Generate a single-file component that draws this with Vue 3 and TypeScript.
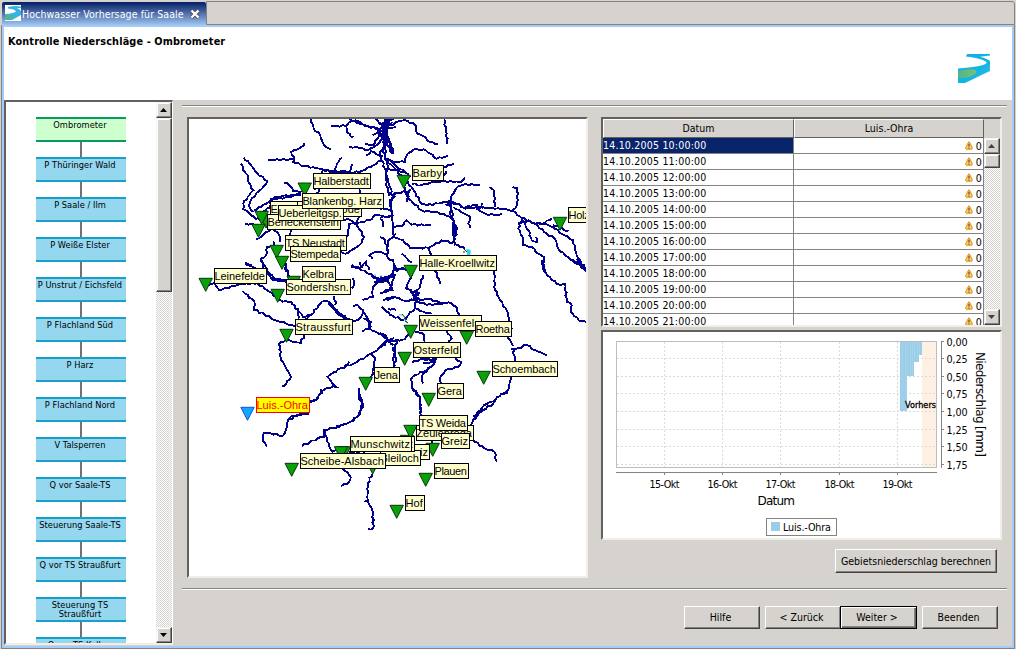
<script setup lang="ts">
interface Station { x: number; y: number; selected?: boolean }
interface Label { text: string; x: number; y: number; w: number; selected?: boolean }
interface Sheet { x: number; y: number; lines: string[] }

const steps: string[] = [
  'Ombrometer', 'P Thüringer Wald', 'P Saale / Ilm', 'P Weiße Elster', 'P Unstrut / Eichsfeld',
  'P Flachland Süd', 'P Harz', 'P Flachland Nord', 'V Talsperren', 'Q vor Saale-TS',
  'Steuerung Saale-TS', 'Q vor TS Straußfurt', 'Steuerung TS Straußfurt', 'Q vor TS Kelbra',
]
const hours: number[] = Array.from({ length: 12 }, (_, i) => i + 10)

// River courses, digitised per map sheet in thirds of a pixel
const sheets: Sheet[] = [
  { x: 186, y: 112, lines: [
    '375,20 383,50 403,70 410,92 420,105 435,112', '435,42 478,42 490,30 510,25 540,40 570,48 600,50 630,45',
    '480,40 483,62 502,76', '490,20 520,35 545,42 580,54 600,60', '580,52 575,80 560,100 538,95',
    '490,105 520,108 545,115 570,100 590,80 600,70', '600,20 590,50 600,80 590,110 580,130 555,118 540,130',
    '612,20 598,60 612,90 622,120', '590,60 605,100 618,125', '570,20 590,45 620,30', '575,55 590,75 580,95', '560,70 580,60 600,95',
    '247,144 325,142 322,150 355,162 400,170 440,178 480,182 520,180 555,165 585,145 590,130',
    '325,142 316,120 335,112 355,98 355,92', '173,137 190,155 215,185 243,207 240,218 215,240 195,265 190,285 203,300',
    '165,155 172,175 185,190 187,210 202,235 185,255 172,275 172,292 190,305 208,320',
    '203,295 225,285 248,270 262,258 300,250 345,248', '295,212 310,220 322,238 340,240 355,232', '345,240 315,255 255,262 250,285',
    '445,178 452,155 468,138', '485,182 495,170 500,155', '412,170 405,200 400,235 390,245', '410,172 440,182 480,176',
    '178,335 215,338', '210,380 225,375 240,360 262,350 280,370 282,390', '262,388 265,400 243,405 240,430 225,440 232,465 240,480',
    '178,455 200,465 210,480', '590,110 605,160 600,200 605,240 628,255', '628,240 612,280 620,310 600,315 570,308 550,325 510,335 490,335 485,370 478,385',
    '510,335 535,375 520,400 500,412 480,425 465,420', '630,365 605,390 605,425 570,420 550,430 560,440',
    '495,465 520,470 540,450 550,475', '520,230 528,250', '520,310 510,335', '465,320 495,325 515,335', '315,355 308,375', '298,450 300,480', '385,235 440,185 500,182', '230,300 260,280 300,270', '208,320 240,325',
  ] },
  { x: 380, y: 112, lines: [
    '0,50 30,40 55,28 75,25 105,38 112,65 130,72 150,90 175,97', '193,20 197,55 203,97', '15,20 20,60 10,90 18,120 15,140 35,148 75,150 80,130 100,113 130,112 150,125 170,140 203,132',
    '0,60 20,80 30,95 40,125', '25,20 10,50 25,80 15,110', '35,148 50,165 75,180 90,195', '5,35 40,20', '0,30 20,52', '0,130 15,170 25,210 35,240 25,250',
    '15,140 45,170 75,205 95,225 125,275 140,280 200,270 212,275', '15,170 50,175 80,185', '190,165 222,155', '190,190 200,178', '95,215 125,220 150,212 195,208 245,210 255,198',
    '75,205 75,240 85,260 125,295 190,305 215,320 225,345 222,390 235,400 255,412', '90,230 80,270', '212,275 215,250 232,225 250,218 300,218',
    '212,275 212,310 232,350 220,390', '207,265 217,300 220,335 218,360 226,400', '212,270 240,278 255,290 290,285 345,290 375,290 400,298 425,318 465,335 495,335 520,345 545,365 580,385 590,430 615,470',
    '255,288 280,278 310,290', '290,275 290,290', '308,272 305,287', '330,225 342,235 345,285', '398,225 412,228 412,270 405,290 395,300', '290,290 315,305 345,310 365,305', '220,285 270,315 265,335 270,348', '212,265 200,278 235,275 245,288',
    '465,335 500,365 525,380 535,410 555,430 580,445 615,460', '465,335 495,332 515,318', '520,340 545,348 565,358', '425,318 415,350 428,375 428,400 455,405 475,425 492,435 490,455 495,480', '425,320 445,355 455,385 470,390 468,375', '415,335 445,325 455,335',
    '590,440 618,475', '40,345 65,342 80,325 95,338 152,340', '90,235 45,245 30,265 35,300 38,345 42,375 70,385 90,408 145,408 185,385 220,393', '145,408 155,430', '0,290 35,292', '0,318 30,310', '0,320 10,330 8,345', '0,375 15,385 20,410 25,440 40,445 50,480', '65,425 95,452', '45,472 75,470',
  ] },
  { x: 186, y: 260, lines: [
    '178,8 210,25 240,35 260,60 300,65', '228,0 245,35 270,58 300,60', '60,75 85,70 100,90 165,72 215,70 250,95 290,125 315,125 335,150 340,175',
    '170,93 205,125 205,150 235,162 265,180 300,190 330,200', '410,122 375,165 350,185', '410,122 430,125 445,145 480,178', '425,130 460,160 490,178', '428,125 450,158 480,178', '335,145 350,170 375,165',
    '445,108 448,135', '500,55 505,75 498,85', '295,10 300,25 310,50', '355,225 345,248 318,245 300,238 278,252 285,275 283,290 300,325 315,350 295,378 287,380',
    '555,280 575,270 600,245 625,235', '555,280 540,290 500,312 465,325 435,342 425,350 440,372 450,380 420,385 405,395 390,420 370,425', '490,305 475,322', '405,395 405,388',
    '310,478 335,465 370,460', '555,280 568,295 562,325 555,360', '520,385 522,410 530,430 518,465 500,480', '497,15 520,25 550,42 580,58 610,50 630,45', '520,5 525,25', '550,40 575,62 600,58', '565,65 605,65', '570,52 595,68', '575,62 560,85 560,110 530,120', '605,60 620,90 590,98', '630,20 615,45 600,60',
    '500,140 515,135 530,150 528,165 515,180 500,182 490,178', '530,155 545,175 555,200 530,215', '530,175 555,185 550,205 570,215 590,225 605,245', '605,145 630,150', '590,120 625,115', '620,260 630,295 620,330',
  ] },
  { x: 380, y: 260, lines: [
    '0,60 40,45 42,20 60,28 90,28', '0,98 28,90 40,60 40,42', '0,50 15,60 38,52', '95,45 80,80 105,105 105,145 130,155 155,162', '75,85 95,95 120,100', '90,95 115,115 100,110', '105,90 110,130', '95,105 118,105', '110,100 120,75 130,45', '165,32 182,72',
    '15,118 40,110 75,122 105,120 145,118 185,128 215,130 232,145 235,170', '115,125 140,135 190,130', '5,140 30,165 70,180 85,165 105,145', '343,30 345,90 360,120 385,160 388,185 395,205 385,235 400,258', '400,270 440,255 465,270 485,278 500,285', '392,267 405,267 400,275 405,290 408,305',
    '392,350 388,375 380,395 350,412 340,430 310,450 285,472', '370,400 385,398', '280,465 290,478', '487,0 490,30 515,60 540,75 555,72 560,125 575,135 572,155 595,180 618,186', '570,0 600,15 618,35', '580,0 610,18 618,30',
    '0,220 15,225 25,245 75,238 90,215', '0,258 15,255 20,240', '20,240 40,255', '50,240 45,265 40,300 45,320', '100,212 130,222 135,245', '200,212 215,235 205,245', '95,308 120,298 165,300 160,315 130,335 105,345 93,358 95,380 120,410 122,470', '130,298 170,298', '130,310 165,306', '160,315 130,340 125,355 130,370', '225,295 243,305 235,320 195,332 180,355 185,380',
  ] },
  { x: 236, y: 390, lines: [
    '260,0 245,25 220,38', '210,70 165,80 155,95 150,120 140,138 105,130 83,130 80,145 92,170', '530,0 550,20 555,75', '370,0 368,20 380,45 370,75 345,95 310,110 265,120 265,140 245,145 220,158 198,168', '265,120 280,170 290,185 300,180', '300,108 330,102',
    '318,235 340,255 343,270 335,282 315,288', '410,250 395,280 395,330 410,365 412,415 397,418', '780,28 745,45 720,75 705,105 710,150 745,175 775,185 782,215', '710,80 725,78', '588,150 588,170', '370,180 370,195', '382,180 382,195', '340,185 365,185', '385,335 395,330',
  ] },
]

/** Subdivides a course and offsets the inner vertices a little so that it meanders. */
function meander(line: string): string {
  const p = line.split(' ').map((s) => s.split(',').map(Number))
  let out = `${p[0][0]},${p[0][1]}`
  for (let i = 1; i < p.length; i++) {
    const [ax, ay] = p[i - 1]
    const [bx, by] = p[i]
    const len = Math.hypot(bx - ax, by - ay)
    const n = Math.max(1, Math.round(len / 9))
    for (let k = 1; k < n; k++) {
      const t = k / n
      const off = Math.sin(ax * 1.7 + ay * 2.3 + k * 2.6) * 2.4
      out += ` ${(ax + (bx - ax) * t - ((by - ay) / len) * off).toFixed(1)},${(ay + (by - ay) * t + ((bx - ax) / len) * off).toFixed(1)}`
    }
    out += ` ${bx},${by}`
  }
  return out
}

const stations: Station[] = [
  { x: 304.7, y: 183 }, { x: 403.7, y: 175.3 }, { x: 560, y: 217.3 }, { x: 266, y: 215 }, { x: 261.7, y: 211.3 },
  { x: 258.5, y: 224.3 }, { x: 276.7, y: 245.3 }, { x: 282, y: 256.3 }, { x: 205.7, y: 278.3 }, { x: 293.7, y: 276.3 },
  { x: 277.7, y: 289.3 }, { x: 286.5, y: 329.3 }, { x: 365.7, y: 377.3 }, { x: 410.7, y: 265.3 }, { x: 410.7, y: 325.3 },
  { x: 466.7, y: 331.3 }, { x: 404.7, y: 352.3 }, { x: 483.7, y: 371.3 }, { x: 428.7, y: 393.3 }, { x: 407, y: 435.3 },
  { x: 410.5, y: 425.3 }, { x: 432.7, y: 443.3 }, { x: 344, y: 446.7 }, { x: 341, y: 446.7 }, { x: 372.7, y: 461 },
  { x: 425.7, y: 473.3 }, { x: 396.7, y: 505.3 }, { x: 291.7, y: 463.3 }, { x: 247.5, y: 407.3, selected: true },
]
const labels: Label[] = [
  { text: 'Halberstadt', x: 313, y: 173, w: 58 }, { text: 'Elbingerode', x: 270, y: 201, w: 60 }, { text: 'Wernigerode', x: 297, y: 201, w: 65 },
  { text: 'Beneckenstein', x: 267, y: 214, w: 74 }, { text: 'Ueberleitgsp.', x: 278, y: 205, w: 66 }, { text: 'Blankenbg. Harz', x: 302, y: 193, w: 82 },
  { text: 'TS Neustadt', x: 285, y: 235, w: 62 }, { text: 'Stempeda', x: 290, y: 246, w: 51 }, { text: 'Leinefelde', x: 214, y: 268, w: 53 },
  { text: 'Sondershsn.', x: 286, y: 279, w: 65 }, { text: 'Kelbra', x: 302, y: 266, w: 34 }, { text: 'Straussfurt', x: 295, y: 319, w: 58 },
  { text: 'Jena', x: 374, y: 367, w: 26 }, { text: 'Barby', x: 412, y: 165, w: 32 }, { text: 'Holzdorf', x: 568, y: 207, w: 42 },
  { text: 'Halle-Kroellwitz', x: 419, y: 255, w: 78 }, { text: 'Weissenfels', x: 419, y: 315, w: 63 }, { text: 'Roetha', x: 475, y: 321, w: 37 },
  { text: 'Osterfeld', x: 413, y: 342, w: 48 }, { text: 'Schoembach', x: 492, y: 361, w: 66 }, { text: 'Gera', x: 437, y: 383, w: 27 },
  { text: 'Zeulenroda', x: 416, y: 425, w: 58 }, { text: 'TS Weida', x: 419, y: 415, w: 49 }, { text: 'Greiz', x: 441, y: 433, w: 29 },
  { text: 'Schleiz', x: 392, y: 444, w: 38 }, { text: 'Bleiloch', x: 380, y: 450, w: 41 }, { text: 'Munschwitz', x: 353, y: 436, w: 62 },
  { text: 'Munschwitz', x: 350, y: 436, w: 62 }, { text: 'Scheibe-Alsbach', x: 300, y: 453, w: 86 }, { text: 'Plauen', x: 434, y: 463, w: 35 },
  { text: 'Hof', x: 405, y: 495, w: 20 }, { text: 'Luis.-Ohra', x: 256, y: 397, w: 54, selected: true },
]

const xTicks = [
  { x: 664.5, text: '15-Okt' }, { x: 722.5, text: '16-Okt' }, { x: 780.5, text: '17-Okt' }, { x: 839.5, text: '18-Okt' }, { x: 897.5, text: '19-Okt' },
]
const yTicks = [
  { y: 341.5, text: '0,00' }, { y: 358.5, text: '0,25' }, { y: 376.5, text: '0,50' }, { y: 393.5, text: '0,75' },
  { y: 411.5, text: '1,00' }, { y: 429.5, text: '1,25' }, { y: 446.5, text: '1,50' }, { y: 464.5, text: '1,75' },
]
const barLines = [902, 905, 907, 910, 912, 914, 917, 919]
</script>

<template>
  <div class="window">
    <div class="tabs">
      <div class="tab">
        <svg class="tab-icon" width="16" height="16" viewBox="0 0 16 16">
          <rect width="16" height="16" fill="#fff" />
          <path d="M3 2Q9 .5 16 1.5V3H12Q16 5 16 6.5V10L7 15H0V9Q8 8.5 11 6.5Q10 4 3 3.5Z" fill="#38b4e0" />
          <ellipse cx="4" cy="12" rx="4.5" ry="2.2" fill="#55b48c" />
        </svg>
        <span class="tab-title">Hochwasser Vorhersage für Saale</span>
        <svg class="tab-close" width="10" height="10" viewBox="0 0 10 10">
          <path d="M1.5 1.5L8.5 8.5M8.5 1.5L1.5 8.5" stroke="#505060" stroke-width="4" />
          <path d="M1.5 1.5L8.5 8.5M8.5 1.5L1.5 8.5" stroke="#fff" stroke-width="2.4" />
        </svg>
      </div>
      <div class="tab-rest"></div>
    </div>
    <div class="body">
      <header class="head">
        <h1>Kontrolle Niederschläge - Ombrometer</h1>
        <svg class="logo" width="32" height="29" viewBox="0 0 32 29">
          <defs>
            <linearGradient id="water" x1="0" y1="0" x2="1" y2="1"><stop offset="0" stop-color="#12b0e8" /><stop offset=".6" stop-color="#10b4e6" /><stop offset="1" stop-color="#50b8e0" /></linearGradient>
            <linearGradient id="land" x1="0" x2="1"><stop offset="0" stop-color="#50b48c" /><stop offset="1" stop-color="#7cc070" /></linearGradient>
          </defs>
          <path d="M9 0H32V1.6L22 2.8Q30 5 32 7V17L7 29H0V14.5Q18 13 25 11Q31 9 27 7Q20 4 8 2.6Z" fill="url(#water)" />
          <path d="M0 17Q7 15 13 15.2Q20 15.5 18 19Q14 24 0 24.5Z" fill="url(#land)" />
        </svg>
      </header>
      <div class="content">
        <aside class="flow">
          <div class="flow-view">
            <div v-for="(s, i) in steps" :key="s" class="step" :class="{ active: i === 0 }"><span>{{ s }}</span></div>
          </div>
          <div class="scroll">
            <div class="sbtn"><svg width="8" height="4"><path d="M0 4L3.5 0L7 4Z" fill="#000" /></svg></div>
            <div class="thumb thumb-flow"></div>
            <div class="track"></div>
            <div class="sbtn"><svg width="8" height="4"><path d="M0 0L3.5 4L7 0Z" fill="#000" /></svg></div>
          </div>
        </aside>
        <main class="main">
          <div class="rule"></div>
          <div class="panels">
            <div class="frame map">
              <svg width="397" height="457" viewBox="189 119 397 457">
                <g v-for="sh in sheets" :key="`${sh.x}-${sh.y}`" :transform="`translate(${sh.x} ${sh.y}) scale(.33333)`" class="river">
                  <polyline v-for="l in sh.lines" :key="l" :points="meander(l)" />
                </g>
                <path d="M374 275h2M380 276h2M467 249.5l3 1v3.5l-2 1zM399 315h3M404 319l3 3" stroke="#20d8e8" fill="#20d8e8" stroke-width="1.2" />
                <path d="M463 248l4 4M463 252h2M402 314l5 6M405 321l3 2" stroke="#222" />
                <path v-for="(m, i) in stations" :key="i" :d="`M${m.x - 6.7} ${m.y}h13.4l-6.7 13z`" :fill="m.selected ? '#10a8ff' : '#0aa00a'" :stroke="m.selected ? '#1450e0' : '#063806'" />
                <g v-for="(l, i) in labels" :key="i">
                  <rect :x="l.x + 0.5" :y="l.y + 0.5" :width="l.w - 1" height="15" :fill="l.selected ? '#ff0' : '#ffffce'" :stroke="l.selected ? '#f00' : '#000'" />
                  <text class="lab" :x="l.x + 0.4" :y="l.y + 12" :textLength="l.w - 2.5" :fill="l.selected ? '#f00' : '#000'">{{ l.text }}</text>
                </g>
              </svg>
            </div>
            <div class="right">
              <div class="frame table">
                <div class="grid">
                  <div class="row hrow"><div class="th c1">Datum</div><div class="th c2">Luis.-Ohra</div></div>
                  <div v-for="(h, i) in hours" :key="h" class="row">
                    <div class="c1 td" :class="{ sel: i === 0 }">14.10.2005 {{ h }}:00:00</div>
                    <div class="c2 td val">
                      <svg width="8" height="9" viewBox="0 0 8 9"><path d="M4 .7L5.6 3L7.5 7.2L6.8 8.3H1.2L.5 7.2L2.4 3Z" fill="#fcc858" stroke="#d89830" /><path d="M4 2.8V5.6M4 6.4V7.5" stroke="#604010" stroke-width="1.1" /></svg>
                      <span>0</span>
                    </div>
                  </div>
                </div>
                <div class="scroll tscroll">
                  <div class="sbtn"><svg width="8" height="4"><path d="M0 4L3.5 0L7 4Z" fill="#424142" /></svg></div>
                  <div class="thumb thumb-table"></div>
                  <div class="track"></div>
                  <div class="sbtn"><svg width="8" height="4"><path d="M0 0L3.5 4L7 0Z" fill="#424142" /></svg></div>
                </div>
              </div>
              <div class="frame chart">
                <svg width="397" height="206" viewBox="603 332 397 206">
                  <rect x="922" y="342" width="15" height="125" fill="#fff0e4" />
                  <g stroke="#dadada" stroke-dasharray="2 2">
                    <path v-for="t in xTicks" :key="t.x" :d="`M${t.x} 342V467`" />
                    <path v-for="t in yTicks" :key="t.y" :d="`M617 ${t.y}H936`" />
                  </g>
                  <path d="M900 342H922V355H919V362H914V376H907V411H900Z" fill="#9acde8" />
                  <path v-for="b in barLines" :key="b" :d="`M${b + 0.5} 342V${b < 907 ? 411 : b < 914 ? 376 : b < 919 ? 362 : 355}`" stroke="#aad6ec" stroke-width=".7" />
                  <rect x="616.5" y="341.5" width="320" height="126" fill="none" stroke="#bdbdbd" />
                  <path d="M616 472.5H937M941.5 341V468" stroke="#848284" fill="none" />
                  <g stroke="#848284">
                    <path v-for="t in xTicks" :key="t.x" :d="`M${t.x} 473V475`" />
                    <path v-for="t in yTicks" :key="t.y" :d="`M942 ${t.y}H944`" />
                  </g>
                  <text v-for="t in xTicks" :key="t.text" class="ct" :x="t.x - 15" y="488" textLength="30">{{ t.text }}</text>
                  <text v-for="t in yTicks" :key="t.text" class="ct" x="946.5" :y="t.y + 4" textLength="21">{{ t.text }}</text>
                  <text class="ct bold" x="905" y="408" textLength="31">Vorhers</text>
                  <text class="cl" x="757.5" y="505" textLength="37.5">Datum</text>
                  <text class="cl" transform="translate(976 352) rotate(90)" textLength="105">Niederschlag [mm]</text>
                  <rect x="766.5" y="518.5" width="70" height="17" fill="#fff" stroke="#848284" />
                  <rect x="771" y="522" width="9" height="9" fill="#9acde8" />
                  <text class="ct" x="783" y="531" textLength="48">Luis.-Ohra</text>
                </svg>
              </div>
              <div class="calc"><button class="btn wide">Gebietsniederschlag berechnen</button></div>
            </div>
          </div>
          <div class="rule"></div>
          <footer class="foot">
            <button class="btn">Hilfe</button>
            <div class="pair"><button class="btn">&lt; Zurück</button><button class="btn default">Weiter &gt;</button></div>
            <button class="btn">Beenden</button>
          </footer>
        </main>
      </div>
    </div>
  </div>
</template>

<style>
body { margin: 0; background: #d6d3ce; overflow: hidden; }
</style>

<style scoped>
* { box-sizing: border-box; }
.window { width: 1016px; height: 649px; padding: 1px 1px 1px 2px; background: #d6d3ce; font: 10.5px/13px "DejaVu Sans Condensed", "DejaVu Sans", sans-serif; color: #000; display: flex; flex-direction: column; }
.tabs { display: flex; height: 24px; flex: none; }
.tab { width: 204px; height: 24px; margin-top: 1px; border-top: 1px solid #0a246a; border-radius: 2px 2px 0 0; background: linear-gradient(#0a246a, #a5cbf7); color: #fff; display: flex; align-items: center; padding-left: 3px; }
.tab-icon { flex: none; margin-bottom: 3px; }
.tab-title { width: 165px; margin-left: 1px; letter-spacing: 0.1px; white-space: nowrap; }
.tab-close { flex: none; margin-left: 3px; margin-bottom: 1px; }
.tab-rest { flex: 1; border: 1px solid #848284; border-radius: 0 3px 0 0; }
.body { flex: 1; border: 2px solid #a5cbf7; outline: 1px solid #848284; margin: 0 1px 0 0; display: flex; flex-direction: column; min-height: 0; clip-path: inset(0 -1px -1px -1px); }
.head { height: 73px; flex: none; background: #fff; display: flex; justify-content: space-between; padding: 8px 22px 0 4px; }
h1 { margin: 0; font-size: 10.8px; line-height: 13px; font-weight: 700; letter-spacing: 0.14px; }
.logo { margin-top: 19px; }
.content { flex: 1; display: flex; min-height: 0; }
.flow { width: 169px; height: 545px; flex: none; background: #fff; border: 1px solid; border-width: 2px 1px 2px 2px; border-color: #63615f #fff #f0eeeb #63615f; display: flex; overflow: hidden; }
.flow-view { flex: 1; height: 541px; overflow: hidden; padding: 15px 0 0 30px; }
.step { width: 90px; height: 25px; margin-bottom: 15px; border: solid #18a0cc; border-width: 2px 0; background: #94d7ef; position: relative; text-align: center; font-size: 9.2px; line-height: 9px; padding-top: 1px; }
.step::after { content: ""; position: absolute; left: 44px; top: 23px; width: 2px; height: 15px; background: #737173; }
.step.active { background: #ceffce; border-color: #089a63; }
.step span { display: block; margin: 0 -1px 0 -3px; letter-spacing: 0.04px; }
.scroll { width: 16px; flex: none; display: flex; flex-direction: column; }
.sbtn, .thumb { background: #d6d3ce; border: 1px solid; border-color: #f4f2ee #424142 #424142 #f4f2ee; box-shadow: inset -1px -1px #848284, inset 1px 1px #fff; flex: none; }
.sbtn { height: 16px; display: flex; align-items: center; justify-content: center; }
.thumb-flow { height: 174px; }
.thumb-table { height: 14px; }
.track { flex: 1; background: repeating-conic-gradient(#fff 0 25%, #d6d3ce 0 50%) 0 0 / 2px 2px; }
.main { flex: 1; padding: 5px 5px 0 9px; display: flex; flex-direction: column; }
.rule { height: 2px; border-top: 1px solid #848284; border-bottom: 1px solid #fff; flex: none; }
.panels { height: 481px; padding: 10px 5px 0 5px; display: flex; justify-content: space-between; }
.frame { background: #fff; border: 2px solid; border-color: #63615f #f0eeeb #f0eeeb #63615f; overflow: hidden; }
.map { width: 401px; height: 461px; }
.frame svg { display: block; }
.river { fill: none; stroke: #00008c; stroke-width: 5.7; shape-rendering: crispEdges; }
.lab { font: 11px "Liberation Sans", Arial, sans-serif; }
.right { width: 401px; display: flex; flex-direction: column; }
.table { height: 210px; display: flex; background: #d6d3ce; }
.grid { width: 381px; }
.row { display: flex; height: 16px; }
.hrow { height: 19px; }
.c1 { width: 191px; }
.c2 { width: 190px; }
.th { background: #d6d3ce; text-align: center; line-height: 16px; border: 1px solid; border-color: #fff #63615f #63615f #fff; }
.td { background: #fff; border: solid #848284; border-width: 0 1px 1px 0; line-height: 14px; white-space: nowrap; letter-spacing: 0.21px; }
.sel { background: #08246b; color: #fff; }
.val { display: flex; align-items: center; justify-content: flex-end; gap: 3px; padding-right: 1px; }
.tscroll { margin-top: 19px; height: 187px; }
.chart { height: 210px; margin-top: 3px; }
.ct { font: 9.6px "DejaVu Sans", sans-serif; }
.bold { font-family: "DejaVu Sans Condensed", sans-serif; font-size: 9px; stroke: #000; stroke-width: .3px; }
.cl { font: 12px "DejaVu Sans", sans-serif; }
.calc { display: flex; justify-content: flex-end; padding: 9px 5px 0 0; }
.btn { width: 76px; height: 23px; padding: 0 3px 0 0; font: inherit; color: #000; background: #d6d3ce; border: 1px solid; border-color: #fff #424142 #424142 #fff; box-shadow: inset -1px -1px #848284; white-space: nowrap; }
.btn.wide { width: 162px; height: 24px; padding: 0; }
.btn.default { width: 77px; border: 1px solid #000; box-shadow: inset 1px 1px #fff, inset -1px -1px #63615f, inset -2px -2px #848284; margin-left: -1px; }
.foot { display: flex; justify-content: flex-end; gap: 5px; padding: 16px 9px 0 0; }
.pair { display: flex; }
</style>
